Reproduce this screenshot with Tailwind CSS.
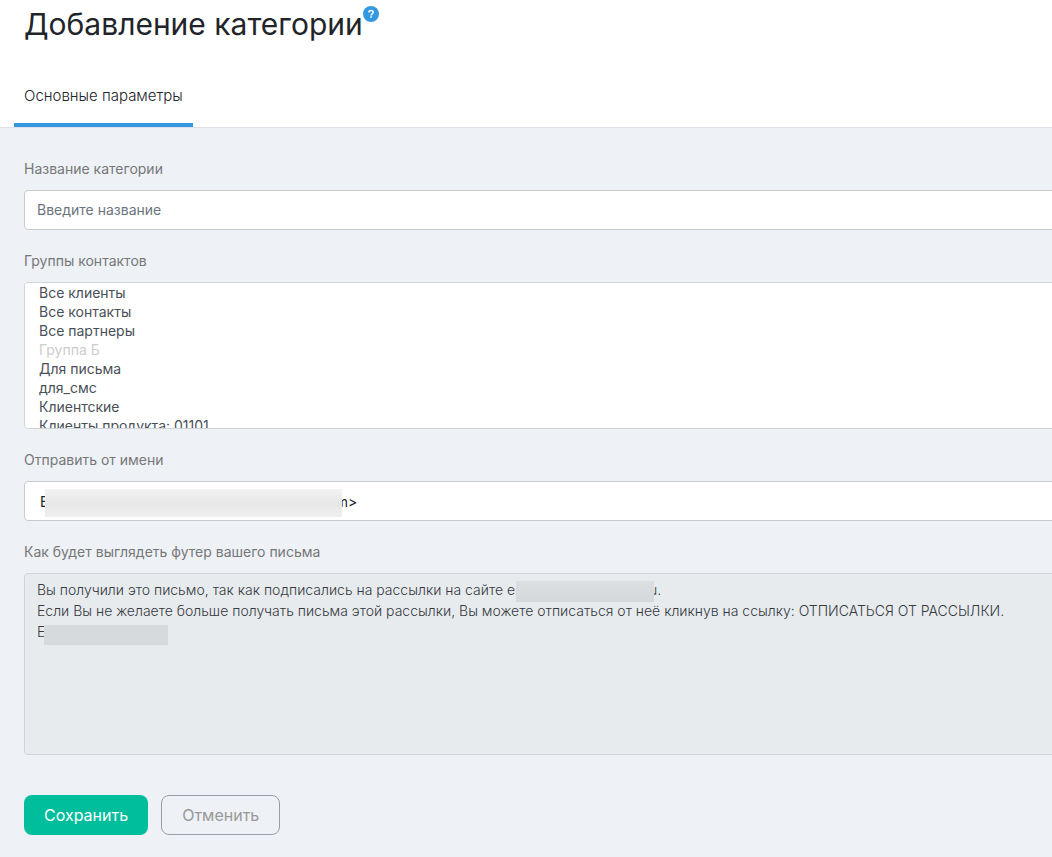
<!DOCTYPE html>
<html lang="ru">
<head>
<meta charset="utf-8">
<meta name="viewport" content="width=device-width, initial-scale=1">
<title>Добавление категории</title>
<script src="https://cdn.jsdelivr.net/npm/@tailwindcss/browser@4"></script>
</head>
<body class="min-h-screen overflow-x-hidden bg-[#eef2f7] font-['Inter','Liberation_Sans',sans-serif] font-normal text-[#212529]">
  <header class="border-b border-[#dee2e6] bg-white">
    <div class="flex items-start px-6 pt-1">
      <h1 class="text-[30px] leading-10">Добавление категории</h1>
      <a href="#help" aria-label="Справка" class="mt-0.5">
        <svg class="size-4" viewBox="0 0 16 16" fill="none" aria-hidden="true">
          <circle cx="8" cy="8" r="8" fill="#3498e0"/>
          <path d="M5.9 6.4C5.9 5.1 6.8 4.5 8 4.5s2.2.7 2.2 1.8c0 1.5-2.1 1.5-2.1 3.1" stroke="#fff" stroke-width="1.5"/>
          <path d="M7.3 10.3h1.6v1.5H7.3z" fill="#fff"/>
        </svg>
      </a>
    </div>
    <nav class="mt-5 flex px-3.5">
      <a href="#main" class="border-b-4 border-[#3498e0] px-2.5 pt-5 pb-[15px] text-[15px] leading-6 font-light">Основные параметры</a>
    </nav>
  </header>

  <form class="pt-[30px] pb-5 pl-6 text-sm leading-[22px]">
    <div class="-mr-6 flex flex-col">
      <label for="name" class="text-[#777]">Название категории</label>
      <input id="name" type="text" placeholder="Введите название" class="mt-2.5 h-10 rounded border border-[#c8cacc] bg-white px-3 pb-0.5 placeholder:text-[#6c757d]">

      <label for="groups" class="mt-5 text-[#777]">Группы контактов</label>
      <select id="groups" multiple class="mt-2.5 h-[147px] rounded border border-[#ced4da] bg-white px-3.5 pt-px text-[#495057]">
        <option class="h-[19px] leading-[19px]">Все клиенты</option>
        <option class="h-[19px] leading-[19px]">Все контакты</option>
        <option class="h-[19px] leading-[19px]">Все партнеры</option>
        <option class="h-[19px] leading-[19px] text-[#cccccc]" disabled>Группа Б</option>
        <option class="h-[19px] leading-[19px]">Для письма</option>
        <option class="h-[19px] leading-[19px]">для_смс</option>
        <option class="h-[19px] leading-[19px]">Клиентские</option>
        <option class="h-[19px] leading-[19px]">Клиенты продукта: 01101</option>
      </select>

      <label for="sender" class="mt-5 text-[#777]">Отправить от имени</label>
      <div class="relative mt-2.5 flex">
        <select id="sender" class="h-10 w-full appearance-none rounded border border-[#c8cacc] bg-white px-[15px] pt-0.5 text-[#212529]">
          <option>E&nbsp;&nbsp;&nbsp;&nbsp;&nbsp;&nbsp;&nbsp;&nbsp;&nbsp;&nbsp;&nbsp;&nbsp;&nbsp;&nbsp;&nbsp;&nbsp;&nbsp;&nbsp;&nbsp;&nbsp;&nbsp;&nbsp;&nbsp;&nbsp;&nbsp;&nbsp;&nbsp;&nbsp;&nbsp;&nbsp;&nbsp;&nbsp;&nbsp;&nbsp;&nbsp;&nbsp;&nbsp;&nbsp;&nbsp;&nbsp;&nbsp;&nbsp;&nbsp;&nbsp;&nbsp;&nbsp;&nbsp;&nbsp;&nbsp;&nbsp;&nbsp;&nbsp;&nbsp;&nbsp;&nbsp;&nbsp;&nbsp;&nbsp;&nbsp;&nbsp;&nbsp;&nbsp;&nbsp;&nbsp;&nbsp;&nbsp;&nbsp;&nbsp;&nbsp;&nbsp;&nbsp;&nbsp;&nbsp;m&gt;</option>
        </select>
        <span class="absolute top-2 left-[21px] h-7 w-[297px] bg-linear-to-b from-[#f3f3f3] via-[#e7e7e7] to-[#efefef]"></span>
      </div>

      <label for="footer" class="mt-5 text-[#777]">Как будет выглядеть футер вашего письма</label>
      <div class="relative mt-2.5 flex">
        <textarea id="footer" readonly class="h-[182px] w-full resize-none overflow-hidden rounded border border-[#ced4da] bg-[#e8ebee] px-3 py-[5px] leading-[21px] font-light text-[#343a40]">Вы получили это письмо, так как подписались на рассылки на сайте e&nbsp;&nbsp;&nbsp;&nbsp;&nbsp;&nbsp;&nbsp;&nbsp;&nbsp;&nbsp;&nbsp;&nbsp;&nbsp;&nbsp;&nbsp;&nbsp;&nbsp;&nbsp;&nbsp;&nbsp;&nbsp;&nbsp;&nbsp;&nbsp;&nbsp;&nbsp;&nbsp;&nbsp;&nbsp;&nbsp;&nbsp;&nbsp;&nbsp;&nbsp;u.
Если Вы не желаете больше получать письма этой рассылки, Вы можете отписаться от неё кликнув на ссылку: ОТПИСАТЬСЯ ОТ РАССЫЛКИ.
E</textarea>
        <span class="absolute top-2 left-[492px] h-[21px] w-[138px] bg-linear-to-b from-[#dcdfe1] to-[#d5d8da]"></span>
        <span class="absolute top-[52px] left-5 h-5 w-[124px] bg-[#d7dadd]"></span>
      </div>
    </div>

    <div class="mt-10 flex gap-[13px] text-base">
      <button type="submit" class="h-10 rounded-lg bg-[#00be9c] px-5 text-white">Сохранить</button>
      <button type="button" class="h-10 rounded-lg border border-[#999ea5] px-5 text-[#999]">Отменить</button>
    </div>
  </form>
</body>
</html>
